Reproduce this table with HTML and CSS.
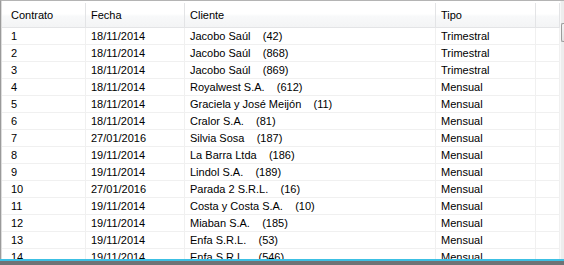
FILE: index.html
```html
<!DOCTYPE html>
<html lang="es">
<head>
<meta charset="utf-8">
<title>Contratos</title>
<link rel="stylesheet" href="styles.css">
</head>
<body>
<div class="frame">
  <div class="viewport">
    <div class="grid">
      <div class="hd c1">Contrato</div><div class="hd">Fecha</div><div class="hd">Cliente</div><div class="hd">Tipo</div><div class="hd last"></div>

      <div class="cell c1">1</div><div class="cell">18/11/2014</div><div class="cell">Jacobo Saúl    (42)</div><div class="cell">Trimestral</div><div class="cell"></div>
      <div class="cell c1">2</div><div class="cell">18/11/2014</div><div class="cell">Jacobo Saúl    (868)</div><div class="cell">Trimestral</div><div class="cell"></div>
      <div class="cell c1">3</div><div class="cell">18/11/2014</div><div class="cell">Jacobo Saúl    (869)</div><div class="cell">Trimestral</div><div class="cell"></div>
      <div class="cell c1">4</div><div class="cell">18/11/2014</div><div class="cell">Royalwest S.A.    (612)</div><div class="cell">Mensual</div><div class="cell"></div>
      <div class="cell c1">5</div><div class="cell">18/11/2014</div><div class="cell">Graciela y José Meijón    (11)</div><div class="cell">Mensual</div><div class="cell"></div>
      <div class="cell c1">6</div><div class="cell">18/11/2014</div><div class="cell">Cralor S.A.    (81)</div><div class="cell">Mensual</div><div class="cell"></div>
      <div class="cell c1">7</div><div class="cell">27/01/2016</div><div class="cell">Silvia Sosa    (187)</div><div class="cell">Mensual</div><div class="cell"></div>
      <div class="cell c1">8</div><div class="cell">19/11/2014</div><div class="cell">La Barra Ltda    (186)</div><div class="cell">Mensual</div><div class="cell"></div>
      <div class="cell c1">9</div><div class="cell">19/11/2014</div><div class="cell">Lindol S.A.    (189)</div><div class="cell">Mensual</div><div class="cell"></div>
      <div class="cell c1">10</div><div class="cell">27/01/2016</div><div class="cell">Parada 2 S.R.L.    (16)</div><div class="cell">Mensual</div><div class="cell"></div>
      <div class="cell c1">11</div><div class="cell">19/11/2014</div><div class="cell">Costa y Costa S.A.    (10)</div><div class="cell">Mensual</div><div class="cell"></div>
      <div class="cell c1">12</div><div class="cell">19/11/2014</div><div class="cell">Miaban S.A.    (185)</div><div class="cell">Mensual</div><div class="cell"></div>
      <div class="cell c1">13</div><div class="cell">19/11/2014</div><div class="cell">Enfa S.R.L.    (53)</div><div class="cell">Mensual</div><div class="cell"></div>
      <div class="cell c1">14</div><div class="cell">19/11/2014</div><div class="cell">Enfa S.R.L.    (546)</div><div class="cell">Mensual</div><div class="cell"></div>
    </div>
    <div class="vscroll"><div class="vbtn"></div></div>
  </div>
  <div class="edge"></div>
  <div class="taskbar"></div>
</div>
</body>
</html>
```

FILE: styles.css
```css
html, body {
  margin: 0;
  padding: 0;
  background: #fff;
}

.frame {
  width: 564px;
  height: 265px;
  overflow: hidden;
  display: flex;
  flex-direction: column;
  font-family: "Liberation Sans", Arial, sans-serif;
  font-size: 11px;
  color: #000;
}

.viewport {
  height: 259px;
  flex: none;
  display: flex;
  border-top: 1px solid #b4b4b4;
  border-left: 1px solid #9a9a9a;
  padding-left: 1px;
  box-sizing: border-box;
  overflow: hidden;
  background: #dcdcdc;
}

.grid {
  flex: none;
  width: 558px;
  padding-top: 2px;
  display: grid;
  grid-template-columns: 84px 99px 251px 100px 24px;
  grid-template-rows: 25px;
  grid-auto-rows: 17px;
  align-content: start;
  background: #fff;
}

.grid .hd {
  height: 25px;
  box-sizing: border-box;
  padding-left: 5px;
  display: flex;
  align-items: center;
  white-space: pre;
  background: linear-gradient(#ffffff 0%, #ffffff 45%, #f8f9fa 55%, #f3f4f5 100%);
  border-right: 1px solid #e3e4e6;
  border-bottom: 1px solid #e3e4e6;
}

.grid .cell {
  box-sizing: border-box;
  height: 17px;
  padding-left: 5px;
  display: flex;
  align-items: center;
  white-space: pre;
  border-right: 1px solid #f0f0f0;
  border-bottom: 1px solid #f0f0f0;
  overflow: hidden;
}

.grid .c1 {
  padding-left: 9px;
}

.vscroll {
  flex: 1;
  background: #ededed;
  border-left: 1px solid #f8f8f8;
}

.vbtn {
  margin-top: 22px;
  height: 17px;
  border: 1px solid #9c9c9c;
  border-right: none;
  border-radius: 2px 0 0 2px;
  background: linear-gradient(#f4f4f4, #e2e2e2);
}

.edge {
  height: 2px;
  flex: none;
  background: #3cc0e4;
}

.taskbar {
  flex: 1;
  background: #6e7275;
}
```
